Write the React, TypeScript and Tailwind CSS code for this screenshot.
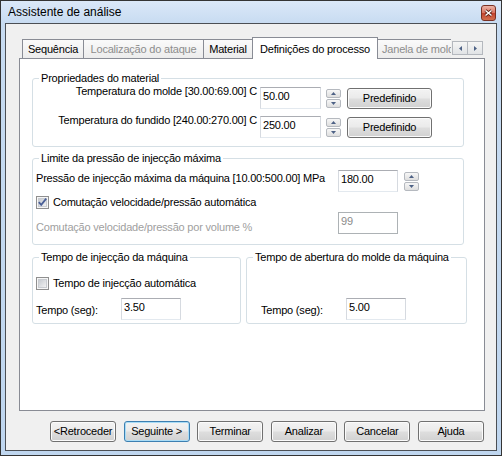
import clsx from "clsx";
import type { ReactNode } from "react";

const ui = "font-['Liberation_Sans',Arial,sans-serif] text-[11px] leading-[13px] tracking-[-0.2px] text-black";

const Spinner = ({ className }: { className?: string }) => (
  <div className={clsx("flex w-[15px] flex-none flex-col gap-[1px]", className)}>
    {["up", "down"].map((d) => (
      <div
        key={d}
        className="flex h-[9px] items-center justify-center rounded-[2px] border border-[#b5b9bf] bg-[linear-gradient(to_bottom,#f7f7f7,#dedede)]"
      >
        <svg width="5" height="3" viewBox="0 0 5 3">
          <path d={d === "up" ? "M2.5 0L5 3H0Z" : "M0 0H5L2.5 3Z"} fill="#4d6185" />
        </svg>
      </div>
    ))}
  </div>
);

const Edit = ({ value, className, disabled }: { value: string; className?: string; disabled?: boolean }) => (
  <div
    className={clsx(
      "h-[22px] flex-none border bg-white px-[2px] pt-[2px]",
      disabled
        ? "border-[#adb2b5] text-[#8b8b8b]"
        : "border-[#abadb3] border-x-[#d6dae0] border-b-[#e3e9ef]",
      className
    )}
  >
    {value}
  </div>
);

const Check = ({ checked }: { checked?: boolean }) => (
  <svg width="13" height="13" viewBox="0 0 13 13" className="flex-none">
    <defs>
      <linearGradient id={checked ? "cg1" : "cg2"} x1="0" y1="0" x2="1" y2="1">
        <stop offset="0" stopColor="#c5c9cf" />
        <stop offset="1" stopColor="#f4f4f4" />
      </linearGradient>
    </defs>
    <rect x="0.5" y="0.5" width="12" height="12" fill="#f6f6f6" stroke="#8f8f8f" />
    <rect x="2.5" y="2.5" width="8" height="8" fill={`url(#${checked ? "cg1" : "cg2"})`} stroke="#c9ccd1" />
    {checked && <path d="M2.8 6.2L5.2 8.8L10.2 2.6" stroke="#4a5f97" strokeWidth="1.8" fill="none" />}
  </svg>
);

const Btn = ({ label, focused, className }: { label: string; focused?: boolean; className?: string }) => (
  <button
    className={clsx(
      "flex h-[21px] flex-none items-center justify-center rounded-[3px] border bg-[linear-gradient(to_bottom,#f3f3f3_0%,#ebebeb_45%,#dddddd_55%,#d1d1d1_100%)]",
      focused
        ? "border-[#3c7fb1] shadow-[inset_0_0_0_1px_#a9dcf6]"
        : "border-[#707070] shadow-[inset_0_0_0_1px_#fbfbfb]",
      className
    )}
  >
    {label}
  </button>
);

const Group = ({ title, className, children }: { title: string; className?: string; children: ReactNode }) => (
  <fieldset className={clsx("flex-none rounded-[3px] border border-[#d5dfe5]", className)}>
    <legend className="ml-[6px] px-[2px] leading-[13px]">{title}</legend>
    {children}
  </fieldset>
);

const Tab = ({
  label,
  w,
  first,
  selected,
  disabled,
  clipped,
}: {
  label: string;
  w: string;
  first?: boolean;
  selected?: boolean;
  disabled?: boolean;
  clipped?: boolean;
}) => (
  <div
    className={clsx(
      "flex flex-none items-center overflow-hidden whitespace-nowrap border-l border-t border-[#898c95]",
      w,
      !first && "-ml-[1px]",
      clipped ? "justify-start pl-[4px]" : "justify-center border-r",
      selected
        ? "relative z-10 -mb-[1px] h-[22px] bg-white pt-[1px]"
        : "h-[19px] bg-[linear-gradient(to_bottom,#fafafa,#ececec)]",
      disabled ? "text-[#8d8d8d]" : "text-black"
    )}
  >
    {label}
  </div>
);

const Arrow = ({ dir, className }: { dir: "left" | "right"; className?: string }) => (
  <div
    className={clsx(
      "flex h-[14px] w-[16px] flex-none items-center justify-center border border-[#b4b8be] bg-[linear-gradient(to_bottom,#f5f5f5,#e1e3e6)]",
      className
    )}
  >
    <svg width="3" height="5" viewBox="0 0 3 5">
      <path d={dir === "left" ? "M3 0V5L0 2.5Z" : "M0 0V5L3 2.5Z"} fill="#4d6185" />
    </svg>
  </div>
);

export default function App() {
  return (
    <div className={clsx("h-[457px] w-[504px] bg-white", ui)}>
      <div className="flex h-[456px] w-[502px] flex-col border border-[#343434] bg-[linear-gradient(to_bottom,#dbe8f8_0px,#c7dbf1_23px,#bfd6ef_100%)] px-[4px] pb-[4px]">
        {/* Title bar */}
        <div className="flex h-[22px] flex-none items-center justify-between pl-[3px] pr-[1px]">
          <span className="text-[12px] tracking-normal">Assistente de análise</span>
          <div className="mt-[2px] flex h-[16px] w-[15px] items-center justify-center rounded-[3px] border border-[#7a3124] bg-[linear-gradient(to_bottom,#ecb4a7,#d9725f_50%,#c4432e_52%,#d2704f)]">
            <svg width="9" height="8" viewBox="0 0 9 8">
              <path d="M1.5 1.5L7.5 6.5M7.5 1.5L1.5 6.5" stroke="#5a1e14" strokeWidth="3" />
              <path d="M1.5 1.5L7.5 6.5M7.5 1.5L1.5 6.5" stroke="#fff" strokeWidth="1.5" />
            </svg>
          </div>
        </div>

        {/* Client area */}
        <div className="flex flex-1 flex-col border border-[#4b4f55] bg-[#f0f0f0] pt-[12px]">
          {/* Tabs */}
          <div className="relative z-10 ml-[13px] flex h-[22px] w-[466px] flex-none items-end pl-[3px]">
            <Tab w="w-[62px]" first label="Sequência" />
            <Tab w="w-[121px]" label="Localização do ataque" disabled />
            <Tab w="w-[50px]" label="Material" />
            <Tab w="w-[126px]" label="Definições do processo" selected />
            <Tab w="w-[74px]" label="Janela de moldação" disabled clipped />
            <div className="ml-[1px] flex self-start pt-[5px]">
              <Arrow dir="left" />
              <Arrow dir="right" className="-ml-[1px]" />
            </div>
          </div>

          {/* Tab panel */}
          <div className="ml-[13px] h-[353px] w-[466px] flex-none border border-[#898c95] bg-white pl-[12px] pt-[13px]">
            <Group title="Propriedades do material" className="w-[432px] pb-[8px]">
              <div className="mt-[2px] flex items-start">
                <div className="-mt-[2px] w-[224px] text-right">Temperatura do molde [30.00:69.00] C</div>
                <Edit value="50.00" className="ml-[3px] w-[61px]" />
                <Spinner className="ml-[5px] mt-[2px]" />
                <Btn label="Predefinido" className="ml-[6px] mt-[1px] w-[85px]" />
              </div>
              <div className="mt-[7px] flex items-start">
                <div className="-mt-[2px] w-[224px] text-right">Temperatura do fundido [240.00:270.00] C</div>
                <Edit value="250.00" className="ml-[3px] w-[61px]" />
                <Spinner className="ml-[5px] mt-[2px]" />
                <Btn label="Predefinido" className="ml-[6px] mt-[1px] w-[85px]" />
              </div>
            </Group>

            <Group title="Limite da pressão de injecção máxima" className="mt-[5px] w-[432px] pb-[10px]">
              <div className="pl-[3px]">
                <div className="mt-[5px] flex items-start">
                  <div className="mt-[2px] w-[302px] flex-none">Pressão de injecção máxima da máquina [10.00:500.00] MPa</div>
                  <Edit value="180.00" className="w-[60px]" />
                  <Spinner className="ml-[6px] mt-[2px]" />
                </div>
                <div className="mt-[4px] flex items-start">
                  <Check checked />
                  <span className="ml-[4px]">Comutação velocidade/pressão automática</span>
                </div>
                <div className="mt-[3px] flex items-start text-[#a0a0a0]">
                  <div className="mt-[9px] w-[302px] flex-none">Comutação velocidade/pressão por volume %</div>
                  <Edit value="99" disabled className="w-[60px]" />
                </div>
              </div>
            </Group>

            <div className="mt-[6px] flex gap-[5px]">
              <Group title="Tempo de injecção da máquina" className="w-[209px] pb-[3px]">
                <div className="pl-[3px]">
                  <div className="mt-[13px] flex items-start">
                    <Check />
                    <span className="ml-[4px]">Tempo de injecção automática</span>
                  </div>
                  <div className="mt-[8px] flex items-start">
                    <div className="mt-[6px] w-[85px] flex-none">Tempo (seg):</div>
                    <Edit value="3.50" className="w-[60px]" />
                  </div>
                </div>
              </Group>
              <Group title="Tempo de abertura do molde da máquina" className="w-[221px] pb-[3px]">
                <div className="mt-[34px] flex items-start pl-[14px]">
                  <div className="mt-[6px] w-[85px] flex-none">Tempo (seg):</div>
                  <Edit value="5.00" className="w-[60px]" />
                </div>
              </Group>
            </div>
          </div>

          {/* Wizard buttons */}
          <div className="ml-[44px] mt-[10px] flex w-[434px] justify-between">
            <Btn label="<Retroceder" className="w-[66px]" />
            <Btn label="Seguinte >" focused className="w-[66px]" />
            <Btn label="Terminar" className="w-[66px]" />
            <Btn label="Analizar" className="w-[66px]" />
            <Btn label="Cancelar" className="w-[66px]" />
            <Btn label="Ajuda" className="w-[66px]" />
          </div>
        </div>
      </div>
    </div>
  );
}
